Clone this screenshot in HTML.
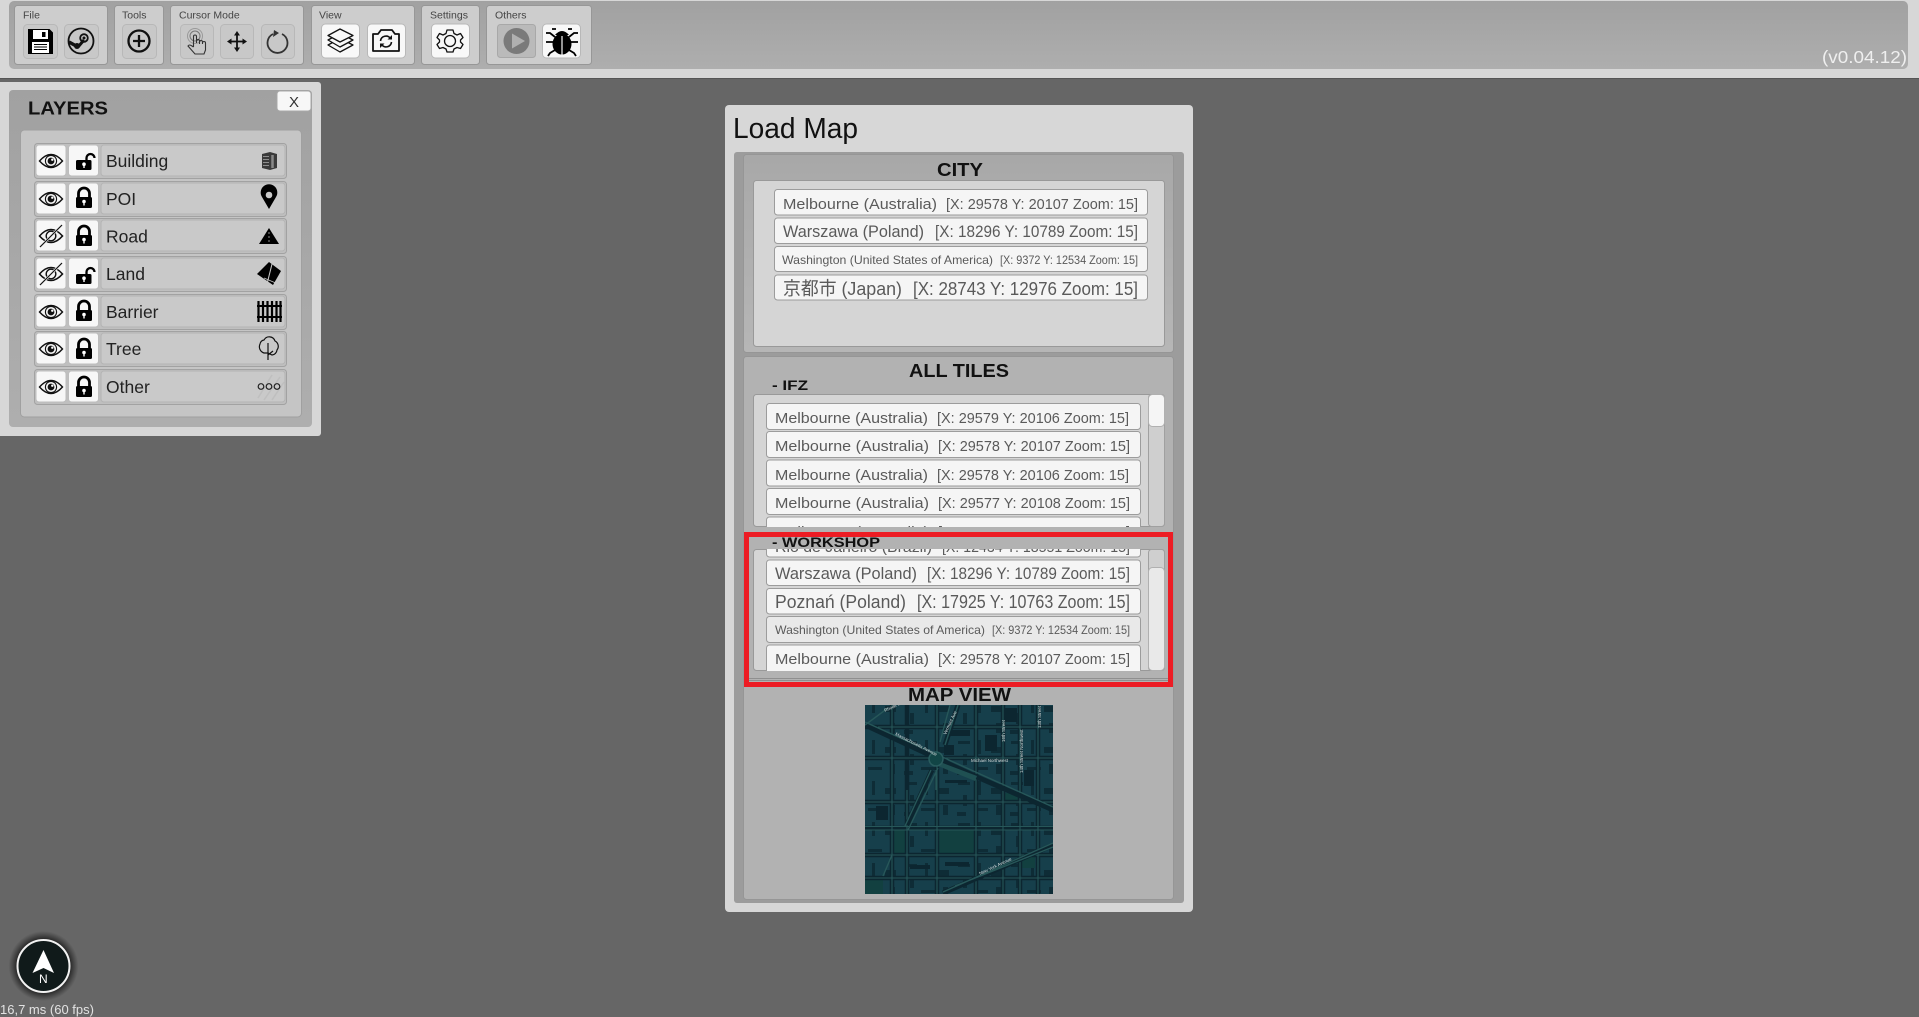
<!DOCTYPE html>
<html lang="en"><head><meta charset="utf-8"><title>Load Map</title>
<style>
html,body{margin:0;padding:0;background:#666;overflow:hidden}
svg{display:block}
text{font-family:"Liberation Sans","Noto Sans CJK JP",sans-serif}
.g{font-size:10.5px;fill:#444}
.it{fill:#5a5a5a}
.h{font-weight:bold;fill:#111}
.l{font-size:17.5px;fill:#222}
</style></head><body>
<svg xmlns="http://www.w3.org/2000/svg" width="1919" height="1017" viewBox="0 0 1919 1017">
<defs>
<linearGradient id="bar" x1="0" y1="0" x2="0" y2="1"><stop offset="0" stop-color="#a1a1a1"/><stop offset="1" stop-color="#aeaeae"/></linearGradient>
<linearGradient id="sec" x1="0" y1="0" x2="0" y2="1"><stop offset="0" stop-color="#a8a8a8"/><stop offset="1" stop-color="#b6b6b6"/></linearGradient>
<radialGradient id="glow"><stop offset=".72" stop-color="#111" stop-opacity=".9"/><stop offset="1" stop-color="#222" stop-opacity="0"/></radialGradient>
<clipPath id="c1"><rect x="753" y="394" width="395" height="133"/></clipPath>
<clipPath id="c2"><rect x="753" y="549" width="395" height="122"/></clipPath>
<clipPath id="cm"><rect x="865" y="705" width="188" height="189"/></clipPath>
<pattern id="bld" width="53" height="41" patternUnits="userSpaceOnUse">
<rect width="53" height="41" fill="#163f4b"/>
<rect x="4" y="3" width="12" height="3" fill="#0e2c36"/><rect x="24" y="2" width="3" height="14" fill="#0e2c36"/><rect x="37" y="9" width="11" height="6" fill="#0e2c36"/><rect x="9" y="16" width="4" height="11" fill="#0e2c36"/><rect x="20" y="29" width="14" height="3" fill="#0e2c36"/><rect x="42" y="26" width="5" height="10" fill="#0e2c36"/><rect x="3" y="33" width="9" height="4" fill="#0e2c36"/>
</pattern>
<g id="eye"><path d="M-11.5 0Q0-13 11.5 0Q0 13-11.5 0Z" fill="#f5f5f5" stroke="#111" stroke-width="1.4"/><circle r="5.6" fill="none" stroke="#111" stroke-width="1.1"/><circle r="3.4" fill="#111"/><circle cx="1.3" cy="-1.3" r="1.2" fill="#fff"/></g>
<g id="eyeoff"><path d="M-11.5 0Q0-13 11.5 0Q0 13-11.5 0Z" fill="#f5f5f5" stroke="#111" stroke-width="1.6"/><circle r="4.8" fill="none" stroke="#111" stroke-width="1.4"/><path d="M-11 11L11-11" stroke="#f5f5f5" stroke-width="2.4"/><path d="M-11 11L11-11" stroke="#111" stroke-width="1.2"/></g>
<g id="lock"><path d="M-5.500 1V-3.500a5.500 5.500 0 0 1 11 0V1" fill="none" stroke="#000" stroke-width="2.800"/><rect x="-8" y="0" width="16" height="11" rx="1.500" fill="#000"/><circle cy="4.500" r="1.800" fill="#fff"/><rect x="-.7" y="5" width="1.400" height="3.500" fill="#fff"/></g>
<g id="lockopen"><rect x="-8" y="0" width="15.500" height="10" rx="1.500" fill="#000"/><path d="M2.500 0V-2a4 4 0 0 1 8 0" fill="none" stroke="#000" stroke-width="2.300"/><circle cy="4.200" r="1.800" fill="#fff"/><rect x="-.7" y="4.500" width="1.400" height="3.500" fill="#fff"/></g>
<g id="row">
<rect x="34.500" y=".5" width="252" height="35" rx="3" fill="#bfbfbf" stroke="#a2a2a2"/>
<rect x="36" y="2" width="30" height="31" rx="3" fill="#f7f7f7" stroke="#bdbdbd"/>
<rect x="68.500" y="2" width="30" height="31" rx="3" fill="#f7f7f7" stroke="#bdbdbd"/>
<rect x="101" y="2" width="184" height="31" rx="3" fill="#c9c9c9" stroke="#b4b4b4"/>
</g>
</defs>

<rect width="1919" height="1017" fill="#666"/>

<!-- top bar -->
<rect x="-4" y="-4" width="1927" height="82.500" rx="3" fill="#d7d7d7" stroke="#555" stroke-width="1"/>
<rect x="9" y="1" width="1899" height="68" rx="5" fill="url(#bar)"/>
<g fill="#cdcdcd" stroke="#979797">
<rect x="14.500" y="5.500" width="93" height="59" rx="3"/>
<rect x="114.500" y="5.500" width="49" height="59" rx="3"/>
<rect x="170.500" y="5.500" width="133" height="59" rx="3"/>
<rect x="311.500" y="5.500" width="103" height="59" rx="3"/>
<rect x="421.500" y="5.500" width="58" height="59" rx="3"/>
<rect x="486.500" y="5.500" width="105" height="59" rx="3"/>
</g>
<text class="g" x="23" y="18.500">File</text>
<text class="g" x="122" y="18.500">Tools</text>
<text class="g" x="179" y="18.500">Cursor Mode</text>
<text class="g" x="319" y="18.500">View</text>
<text class="g" x="430" y="18.500">Settings</text>
<text class="g" x="495" y="18.500">Others</text>
<g fill="#c8c8c8" stroke="#b8b8b8">
<rect x="23.500" y="24.500" width="34" height="34" rx="4"/>
<rect x="64.500" y="24.500" width="34" height="34" rx="4"/>
<rect x="122.500" y="24.500" width="34" height="34" rx="4"/>
<rect x="180.500" y="24.500" width="33" height="34" rx="4"/>
<rect x="220.500" y="24.500" width="33" height="34" rx="4"/>
<rect x="261.500" y="24.500" width="33" height="34" rx="4"/>
<rect x="497.500" y="24.500" width="38" height="33" rx="3" fill="#bababa" stroke="#a8a8a8"/>
</g>
<g fill="#f8f8f8" stroke="#b8b8b8">
<rect x="321.500" y="24" width="38" height="34" rx="4"/>
<rect x="367.500" y="24" width="38" height="34" rx="4"/>
<rect x="431.500" y="24" width="38" height="34" rx="4"/>
<rect x="542.500" y="24" width="38" height="34" rx="4"/>
</g>
<!-- save -->
<path d="M28 29H49.500L53 32.500V54H28Z" fill="#000"/><rect x="33" y="30" width="15" height="9" fill="#fff"/><rect x="42" y="32" width="3.500" height="5" fill="#000"/><rect x="32" y="42" width="17" height="11" fill="#fff"/><path d="M34 44.500H47M34 47H47M34 49.500H47" stroke="#000"/>
<!-- steam -->
<circle cx="81" cy="41" r="12.500" fill="#c8c8c8" stroke="#111" stroke-width="1.800"/><path d="M69 42L78 47" stroke="#111" stroke-width="3.500"/><path d="M78 47L84 40" stroke="#111" stroke-width="3"/><circle cx="84" cy="38" r="3.800" fill="none" stroke="#111" stroke-width="1.800"/><circle cx="84" cy="38" r="1.500" fill="#111"/><circle cx="77" cy="46" r="3" fill="#111"/>
<!-- plus -->
<circle cx="139" cy="41" r="10.500" fill="none" stroke="#111" stroke-width="2.300"/><path d="M139 35V47M133 41H145" stroke="#111" stroke-width="2.300"/>
<!-- hand -->
<g fill="none" stroke="#333"><circle cx="195" cy="36" r="5" stroke="#777"/><circle cx="195" cy="36" r="7.500" stroke="#999"/><path d="M193.500 47V36.500a1.500 1.500 0 0 1 3 0V43M196.500 43V41a1.500 1.500 0 0 1 3 0V44M199.500 42a1.500 1.500 0 0 1 3 0V44M202.500 43a1.500 1.500 0 0 1 3 0V50L204 54H195L188 46Q189 44 192 46L193.500 47" stroke-width="1.100"/></g>
<!-- move -->
<path d="M237 33V50M228.500 41.500H245.500" stroke="#111" stroke-width="1.800"/><path d="M237 31L234 35.500H240ZM237 52L234 47.500H240ZM227 41.500L231.500 38.500V44.500ZM247 41.500L242.500 38.500V44.500Z" fill="#111"/>
<!-- rotate -->
<path d="M273 34A10 10 0 1 0 282 34" fill="none" stroke="#333" stroke-width="1.800"/><path d="M274 30L279 33L273 37Z" fill="#333"/>
<!-- layers -->
<g fill="#f8f8f8" stroke="#111" stroke-width="1.300" stroke-linejoin="round"><path d="M328 45L340 38.500L353 45L340 52Z"/><path d="M328 40L340 33.500L353 40L340 47Z"/><path d="M328 35.500L340 29L353 35.500L340 42Z"/></g>
<!-- camera -->
<path d="M373 34H378L381 30H392L395 34H399V51H373Z" fill="none" stroke="#111" stroke-width="1.800" stroke-linejoin="round"/><path d="M380.500 41a5.500 5.500 0 0 1 10-2.500M391.500 42a5.500 5.500 0 0 1-10 2.500" fill="none" stroke="#111" stroke-width="1.600"/><path d="M392 35V39.500H387.500ZM380 48V43.500H384.500Z" fill="#111"/>
<!-- gear -->
<g fill="none" stroke="#111" stroke-width="1.300" stroke-linejoin="round"><circle cx="450" cy="41" r="5.500"/><path d="M447 30H453L454 33.500L457 35L460.500 33.500L463 37.500L460.500 40V42L463 44.500L460.500 48.500L457 47.500L454 49L453 52H447L446 49L443 47.500L439.500 48.500L437 44.500L439.500 42V40L437 37.500L439.500 33.500L443 35L446 33.500Z"/></g>
<!-- play -->
<circle cx="516.500" cy="41" r="13" fill="#7a7a7a"/><path d="M512 33.500L525 41L512 48.500Z" fill="#b0b0b0"/>
<!-- bug -->
<ellipse cx="562" cy="44" rx="9.500" ry="10.500" fill="#000"/><path d="M555 35Q562 27 569 35Z" fill="#000"/><path d="M562 36V55" stroke="#f8f8f8" stroke-width="1.200"/>
<path d="M556 29L552 29M568 29L572 29M555 37L550 33L546 33M569 37L574 33L578 33M554 42L546 42M570 42L578 42M555 50L550 53L548 56M569 50L574 53L576 56" stroke="#000" stroke-width="1.800" fill="none"/>
<text x="1822" y="63" font-size="17.500" fill="#efefef" textLength="85" lengthAdjust="spacingAndGlyphs">(v0.04.12)</text>

<!-- layers panel -->
<rect x="-4" y="82" width="325" height="354" rx="3" fill="#d7d7d7"/>
<rect x="9" y="90" width="303" height="337" rx="4" fill="url(#bar)"/>
<rect x="20.500" y="130" width="281" height="287" rx="4" fill="#c5c5c5" stroke="#a0a0a0"/>
<rect x="277" y="91" width="34" height="20" rx="3" fill="#f7f7f7" stroke="#a8a8a8"/>
<text x="289" y="107" font-size="15" fill="#333">X</text>
<text x="28" y="114.500" font-size="18" class="h" textLength="80" lengthAdjust="spacingAndGlyphs">LAYERS</text>
<use href="#row" y="143"/><use href="#row" y="181"/><use href="#row" y="218"/><use href="#row" y="256"/><use href="#row" y="294"/><use href="#row" y="331"/><use href="#row" y="369"/>
<use href="#eye" x="51" y="161"/><use href="#eye" x="51" y="199"/><use href="#eyeoff" x="51" y="236"/><use href="#eyeoff" x="51" y="274"/><use href="#eye" x="51" y="312"/><use href="#eye" x="51" y="349"/><use href="#eye" x="51" y="387"/>
<use href="#lockopen" x="84" y="160"/><use href="#lock" x="84" y="197"/><use href="#lock" x="84" y="235"/><use href="#lockopen" x="84" y="274"/><use href="#lock" x="84" y="310"/><use href="#lock" x="84" y="348"/><use href="#lock" x="84" y="386"/>
<text class="l" x="106" y="167">Building</text>
<text class="l" x="106" y="205">POI</text>
<text class="l" x="106" y="242.500">Road</text>
<text class="l" x="106" y="280">Land</text>
<text class="l" x="106" y="318">Barrier</text>
<text class="l" x="106" y="355">Tree</text>
<text class="l" x="106" y="393">Other</text>
<!-- row icons -->
<path d="M262 154L270 152L277 154V168L270 170L262 168Z" fill="#3a3a3a"/><path d="M263 156.500H269M263 159.500H269M263 162.500H269M263 165.500H269" stroke="#aaa" stroke-width=".8"/><path d="M272.500 155V168" stroke="#888" stroke-width="2.500"/>
<path d="M269 209L262 197A8.300 8.300 0 1 1 276 197Z" fill="#000"/><circle cx="269" cy="195" r="3.300" fill="#c9c9c9"/>
<path d="M269 228L279 244H259Z" fill="#000"/><path d="M269 232V234M269 236V238M269 240V242" stroke="#c9c9c9" stroke-width=".7"/>
<path d="M269 262L281 271L273 285L257 274Z" fill="#000"/><path d="M272 264L267 284" stroke="#c9c9c9"/><path d="M264 278L278 284" stroke="#c9c9c9" stroke-width=".8"/>
<path d="M258.500 301V322M263 301V322M267.500 301V322M272 301V322M276.500 301V322M280.500 301V322" stroke="#000" stroke-width="2.200"/><path d="M257 306H282M257 317H282" stroke="#000" stroke-width="2"/>
<path d="M264 340A6 6 0 0 1 275 341A6 6 0 0 1 277 350A5.500 5.500 0 0 1 272 355Q270 354 268 353H264A6.500 6.500 0 0 1 260 344A5 5 0 0 1 264 340Z" fill="none" stroke="#111" stroke-width="1.200"/><path d="M268 343V360M268 355L273 351" stroke="#111" stroke-width="1.200"/>
<path d="M258 398L272 375M264 400L280 377M272 400L284 382" stroke="#bfbfbf" stroke-width="1.500"/>
<g fill="none" stroke="#222" stroke-width="1.200"><circle cx="261" cy="386.500" r="2.800"/><circle cx="269" cy="386.500" r="2.800"/><circle cx="277" cy="386.500" r="2.800"/></g>

<!-- load map panel -->
<rect x="725" y="105" width="468" height="807" rx="4" fill="#d7d7d7"/>
<text x="733" y="138" font-size="29" fill="#111" textLength="125" lengthAdjust="spacingAndGlyphs">Load Map</text>
<rect x="734" y="152" width="450" height="751" rx="3" fill="#9c9c9c"/>
<rect x="743.500" y="154.500" width="430" height="198" rx="3" fill="url(#sec)" stroke="#969696"/>
<text class="h" x="937" y="176" font-size="18" textLength="46" lengthAdjust="spacingAndGlyphs">CITY</text>
<rect x="753.500" y="180.500" width="411" height="166" rx="3" fill="#d5d5d5" stroke="#999"/>
<g fill="#f5f5f5" stroke="#9c9c9c">
<rect x="774.500" y="189.500" width="373" height="25.500" rx="3"/>
<rect x="774.500" y="218" width="373" height="25.500" rx="3"/>
<rect x="774.500" y="246.500" width="373" height="25" rx="3"/>
<rect x="774.500" y="275" width="373" height="25" rx="3"/>
</g>
<text class="it" x="783" y="209" font-size="15" textLength="154" lengthAdjust="spacingAndGlyphs">Melbourne (Australia)</text><text class="it" x="946" y="209" font-size="15" textLength="192" lengthAdjust="spacingAndGlyphs">[X: 29578 Y: 20107 Zoom: 15]</text>
<text class="it" x="783" y="237" font-size="16.500" textLength="141" lengthAdjust="spacingAndGlyphs">Warszawa (Poland)</text><text class="it" x="935" y="237" font-size="16.500" textLength="203" lengthAdjust="spacingAndGlyphs">[X: 18296 Y: 10789 Zoom: 15]</text>
<text class="it" x="782" y="264" font-size="12" textLength="211" lengthAdjust="spacingAndGlyphs">Washington (United States of America)</text><text class="it" x="1000" y="264" font-size="12" textLength="138" lengthAdjust="spacingAndGlyphs">[X: 9372 Y: 12534 Zoom: 15]</text>
<text class="it" x="783" y="295" font-size="18.500" textLength="119" lengthAdjust="spacingAndGlyphs">京都市 (Japan)</text><text class="it" x="913" y="295" font-size="18.500" textLength="225" lengthAdjust="spacingAndGlyphs">[X: 28743 Y: 12976 Zoom: 15]</text>

<rect x="743.500" y="356.500" width="430" height="543" rx="3" fill="#b2b2b2" stroke="#969696"/>
<text class="h" x="909" y="377" font-size="18" textLength="100" lengthAdjust="spacingAndGlyphs">ALL TILES</text>
<text class="h" x="772" y="390" font-size="14" textLength="36" lengthAdjust="spacingAndGlyphs">- IFZ</text>
<rect x="753.500" y="394.500" width="411" height="132" rx="3" fill="#d5d5d5" stroke="#999"/>
<rect x="1148.500" y="394.500" width="16" height="132" rx="3" fill="#cfcfcf" stroke="#a0a0a0"/>
<rect x="1148.500" y="394.500" width="16" height="32" rx="4" fill="#f5f5f5" stroke="#b0b0b0"/>
<g clip-path="url(#c1)">
<g fill="#f5f5f5" stroke="#9c9c9c">
<rect x="766.500" y="403.500" width="374" height="26" rx="3"/>
<rect x="766.500" y="431.500" width="374" height="26" rx="3"/>
<rect x="766.500" y="460" width="374" height="26" rx="3"/>
<rect x="766.500" y="488.500" width="374" height="26" rx="3"/>
<rect x="766.500" y="517" width="374" height="26" rx="3"/>
</g>
<text class="it" x="775" y="423" font-size="15" textLength="153" lengthAdjust="spacingAndGlyphs">Melbourne (Australia)</text><text class="it" x="937" y="423" font-size="15" textLength="192" lengthAdjust="spacingAndGlyphs">[X: 29579 Y: 20106 Zoom: 15]</text>
<text class="it" x="775" y="451" font-size="15" textLength="154" lengthAdjust="spacingAndGlyphs">Melbourne (Australia)</text><text class="it" x="938" y="451" font-size="15" textLength="192" lengthAdjust="spacingAndGlyphs">[X: 29578 Y: 20107 Zoom: 15]</text>
<text class="it" x="775" y="480" font-size="15" textLength="153" lengthAdjust="spacingAndGlyphs">Melbourne (Australia)</text><text class="it" x="937" y="480" font-size="15" textLength="192" lengthAdjust="spacingAndGlyphs">[X: 29578 Y: 20106 Zoom: 15]</text>
<text class="it" x="775" y="508" font-size="15" textLength="154" lengthAdjust="spacingAndGlyphs">Melbourne (Australia)</text><text class="it" x="938" y="508" font-size="15" textLength="192" lengthAdjust="spacingAndGlyphs">[X: 29577 Y: 20108 Zoom: 15]</text>
<text class="it" x="775" y="537" font-size="15" textLength="154" lengthAdjust="spacingAndGlyphs">Melbourne (Australia)</text><text class="it" x="938" y="537" font-size="15" textLength="192" lengthAdjust="spacingAndGlyphs">[X: 29577 Y: 20107 Zoom: 15]</text>
</g>

<!-- workshop -->
<rect x="744" y="527.500" width="429" height="153" fill="#b2b2b2"/>
<rect x="753.500" y="549.500" width="411" height="121" rx="3" fill="#d5d5d5" stroke="#999"/>
<rect x="1148.500" y="549.500" width="16" height="121" rx="3" fill="#cfcfcf" stroke="#a0a0a0"/>
<rect x="1148.500" y="567.500" width="16" height="103" rx="4" fill="#e9e9e9" stroke="#b0b0b0"/>
<g clip-path="url(#c2)">
<g fill="#f5f5f5" stroke="#9c9c9c">
<rect x="766.500" y="531" width="374" height="26" rx="3"/>
<rect x="766.500" y="560" width="374" height="25.500" rx="3"/>
<rect x="766.500" y="588.500" width="374" height="25.500" rx="3"/>
<rect x="766.500" y="616.500" width="374" height="26" rx="3" fill="#e9e9e9"/>
<rect x="766.500" y="645" width="374" height="30" rx="3"/>
</g>
<text class="it" x="775" y="552" font-size="15" textLength="157" lengthAdjust="spacingAndGlyphs">Rio de Janeiro (Brazil)</text><text class="it" x="942" y="552" font-size="15" textLength="188" lengthAdjust="spacingAndGlyphs">[X: 12434 Y: 18551 Zoom: 15]</text>
<text class="it" x="775" y="579" font-size="16.500" textLength="142" lengthAdjust="spacingAndGlyphs">Warszawa (Poland)</text><text class="it" x="927" y="579" font-size="16.500" textLength="203" lengthAdjust="spacingAndGlyphs">[X: 18296 Y: 10789 Zoom: 15]</text>
<text class="it" x="775" y="608" font-size="18" textLength="131" lengthAdjust="spacingAndGlyphs">Poznań (Poland)</text><text class="it" x="917" y="608" font-size="18" textLength="213" lengthAdjust="spacingAndGlyphs">[X: 17925 Y: 10763 Zoom: 15]</text>
<text class="it" x="775" y="634" font-size="12" textLength="210" lengthAdjust="spacingAndGlyphs">Washington (United States of America)</text><text class="it" x="992" y="634" font-size="12" textLength="138" lengthAdjust="spacingAndGlyphs">[X: 9372 Y: 12534 Zoom: 15]</text>
<text class="it" x="775" y="664" font-size="15" textLength="154" lengthAdjust="spacingAndGlyphs">Melbourne (Australia)</text><text class="it" x="938" y="664" font-size="15" textLength="192" lengthAdjust="spacingAndGlyphs">[X: 29578 Y: 20107 Zoom: 15]</text>
</g>
<rect x="744" y="528" width="405" height="21" fill="#b2b2b2"/>
<path d="M749 678.500H1168" stroke="#8f8f8f"/><path d="M749 680.500H1168" stroke="#8f8f8f"/>
<text class="h" x="772" y="547" font-size="14" textLength="108" lengthAdjust="spacingAndGlyphs">- WORKSHOP</text>
<rect x="746.500" y="534.500" width="424" height="150" fill="none" stroke="#ed1c24" stroke-width="5"/>

<text class="h" x="908" y="701" font-size="18" textLength="103" lengthAdjust="spacingAndGlyphs">MAP VIEW</text>

<!-- map -->
<g clip-path="url(#cm)">
<rect x="865" y="705" width="188" height="189" fill="url(#bld)"/>
<rect x="893" y="830" width="14" height="23" fill="#124040"/><rect x="937" y="830" width="38" height="23" fill="#124040"/><rect x="865" y="880" width="18" height="14" fill="#124040"/><rect x="1020" y="856" width="15" height="12" fill="#124040"/><rect x="1004" y="793" width="18" height="8" fill="#124040"/>
<g fill="#0c2630"><rect x="944" y="745" width="10" height="10"/><rect x="1005" y="708" width="12" height="14"/><rect x="876" y="806" width="12" height="14"/><rect x="950" y="730" width="20" height="6"/><rect x="945" y="780" width="22" height="3"/><rect x="985" y="735" width="12" height="16"/><rect x="1024" y="770" width="10" height="16"/><rect x="945" y="862" width="24" height="4"/><rect x="910" y="865" width="20" height="4"/></g>
<g stroke="#0c2630" stroke-width="4.500" fill="none"><path d="M892 705V894M907 705V894M937 705V894M976 705V894M1003 705V894M1020 705V894M1038 705V894M865 727H1053M865 758H1053M865 802H1053M865 828H1053M865 855H1053M865 878H1053"/></g>
<g stroke="#275759" stroke-width="1.100" fill="none"><path d="M892 705V894M907 790V894M937 705V894M976 705V894M1003 705V894M1020 705V894M1038 705V894M878 727H1053M865 758H1053M865 802H1053M865 826.500H1053M865 830H1053M865 855H1053M865 878H1053"/></g>
<g fill="none" stroke="#0c2630" stroke-width="5"><path d="M865 725L977 777L1053 810M943 893L1053 845M932 770L907 825M945 745L958 705"/></g>
<g fill="none" stroke="#275759" stroke-width="1.400"><path d="M865 722L1053 807M943 892L1053 843M955 886L1053 847M938 768L908 830M931 770L905 826M945 745L958 705M940 742L950 705M936 770V790M865 725L888 708M892 855L883 876"/></g>
<path d="M940 762L977 776L975 781L938 766Z" fill="#1f5052"/>
<circle cx="936" cy="759" r="7" fill="#124546" stroke="#2a5c5e" stroke-width="1.500"/>
<g fill="#d5dcdc" font-size="4.500"><text x="971" y="762">Michael Northwest</text>
<text transform="translate(895 735) rotate(27)">Massachusetts Avenue</text>
<text transform="translate(946 735) rotate(-65)">Vermont Ave</text>
<text transform="translate(1005 742) rotate(-90)">16th Street</text>
<text transform="translate(1023 773) rotate(-90)">14th Street Northwest</text>
<text transform="translate(1041 728) rotate(-90)">13th Street</text>
<text transform="translate(980 875) rotate(-25)">New York Avenue</text>
<text transform="translate(885 712) rotate(-25)">Rhode Island</text></g>
</g>

<!-- compass -->
<circle cx="43.500" cy="966" r="35" fill="url(#glow)"/>
<circle cx="43.500" cy="966" r="26" fill="#101a1a" stroke="#f2f2f2" stroke-width="2"/>
<path d="M43.500 950L54 973L43.500 968L32.500 973Z" fill="#fff"/>
<text x="39" y="983" font-size="12" fill="#fff">N</text>
<text x="0" y="1014" font-size="13" fill="#e2e2e2" textLength="94" lengthAdjust="spacingAndGlyphs">16,7 ms (60 fps)</text>
</svg>
</body></html>
